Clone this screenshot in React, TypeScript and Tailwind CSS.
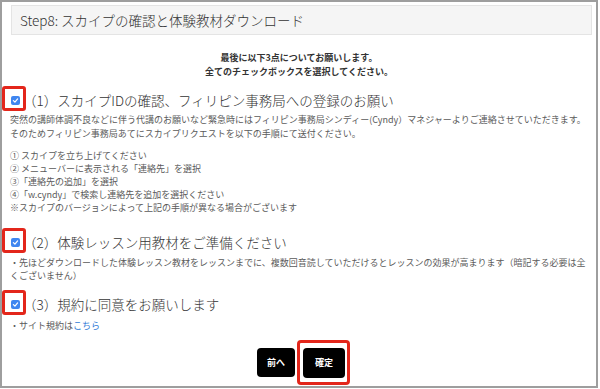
import React from "react";

const font = { fontFamily: '"Noto Sans CJK JP", "Noto Sans", sans-serif' };

function Check({ frame = true }: { frame?: boolean }) {
  return (
    <div className="relative w-[9px] h-[9px] ml-[1px] shrink-0 rounded-[2px] bg-[#3f86f0] flex items-center justify-center">
      <svg width="7" height="7" viewBox="0 0 10 10">
        <path d="M2 5.2 L4.2 7.3 L8 2.8" stroke="white" strokeWidth="1.8" fill="none" strokeLinecap="round" strokeLinejoin="round" />
      </svg>
      {frame && (
        <div className="absolute left-[-9px] top-[-10px] w-[24px] h-[25px] border-[3px] border-[#e3261b] rounded-[3px]" />
      )}
    </div>
  );
}

export default function App() {
  return (
    <div className="w-[600px] h-[389px] bg-white" style={font}>
      <div className="w-[598px] h-[388px] border-2 border-[#9e9e9e] flex flex-col">
        <div className="mt-[3px] ml-[9px] mr-[4px] h-[30px] bg-[#f5f5f5] border border-[#e4e4e4] flex items-center pl-[8px] text-[13.5px] font-light text-[#333]">
          Step8: スカイプの確認と体験教材ダウンロード
        </div>

        <div className="mt-[16px] text-center text-[9px] font-bold leading-[14px] text-[#333]">
          <p>最後に以下3点についてお願いします。</p>
          <p>全てのチェックボックスを選択してください。</p>
        </div>

        <div className="pl-[8px] pr-[4px] flex flex-col">
          <div className="mt-[11px] h-[20px] flex items-center">
            <Check />
            <span className="ml-[3px] text-[13.5px] font-light text-[#333] whitespace-nowrap">（1）スカイプIDの確認、フィリピン事務局への登録のお願い</span>
          </div>
          <div className="mt-[3px] text-[9px] leading-[14px] text-[#5a5a5a]">
            <p className="whitespace-nowrap">突然の講師体調不良などに伴う代講のお願いなど緊急時にはフィリピン事務局シンディー(Cyndy）マネジャーよりご連絡させていただきます。</p>
            <p>そのためフィリピン事務局あてにスカイプリクエストを以下の手順にて送付ください。</p>
          </div>
          <div className="mt-[8px] text-[9px] leading-[13px] text-[#5a5a5a]">
            <p>① スカイプを立ち上げてください</p>
            <p>② メニューバーに表示される「連絡先」を選択</p>
            <p>③「連絡先の追加」を選択</p>
            <p>④「w.cyndy」で検索し連絡先を追加を選択ください</p>
            <p>※スカイプのバージョンによって上記の手順が異なる場合がございます</p>
          </div>

          <div className="mt-[18px] h-[20px] flex items-center">
            <Check />
            <span className="ml-[3px] text-[13.5px] font-light text-[#333] whitespace-nowrap">（2）体験レッスン用教材をご準備ください</span>
          </div>
          <p className="mt-[4px] text-[9px] leading-[13px] text-[#5a5a5a]">
            ・先ほどダウンロードした体験レッスン教材をレッスンまでに、複数回音読していただけるとレッスンの効果が高まります（暗記する必要は全くございません）
          </p>

          <div className="mt-[12px] h-[20px] flex items-center">
            <Check />
            <span className="ml-[3px] text-[13.5px] font-light text-[#333] whitespace-nowrap">（3）規約に同意をお願いします</span>
          </div>
          <p className="mt-[5px] text-[9px] leading-[13px] text-[#5a5a5a]">
            ・サイト規約は<span className="text-[#2f7bd6]">こちら</span>
          </p>

          <div className="mt-[16px] flex justify-center gap-[8px]">
            <div className="w-[38px] h-[29px] bg-black text-white rounded-[4px] text-[9px] font-bold flex items-center justify-center">
              前へ
            </div>
            <div className="relative w-[42px] h-[30px] bg-black text-white rounded-[4px] text-[9px] font-bold flex items-center justify-center">
              確定
              <div className="absolute left-[-6px] right-[-5px] top-[-8px] bottom-[-7px] border-[3px] border-[#e3261b] rounded-[4px]" />
            </div>
          </div>
        </div>
      </div>
    </div>
  );
}
